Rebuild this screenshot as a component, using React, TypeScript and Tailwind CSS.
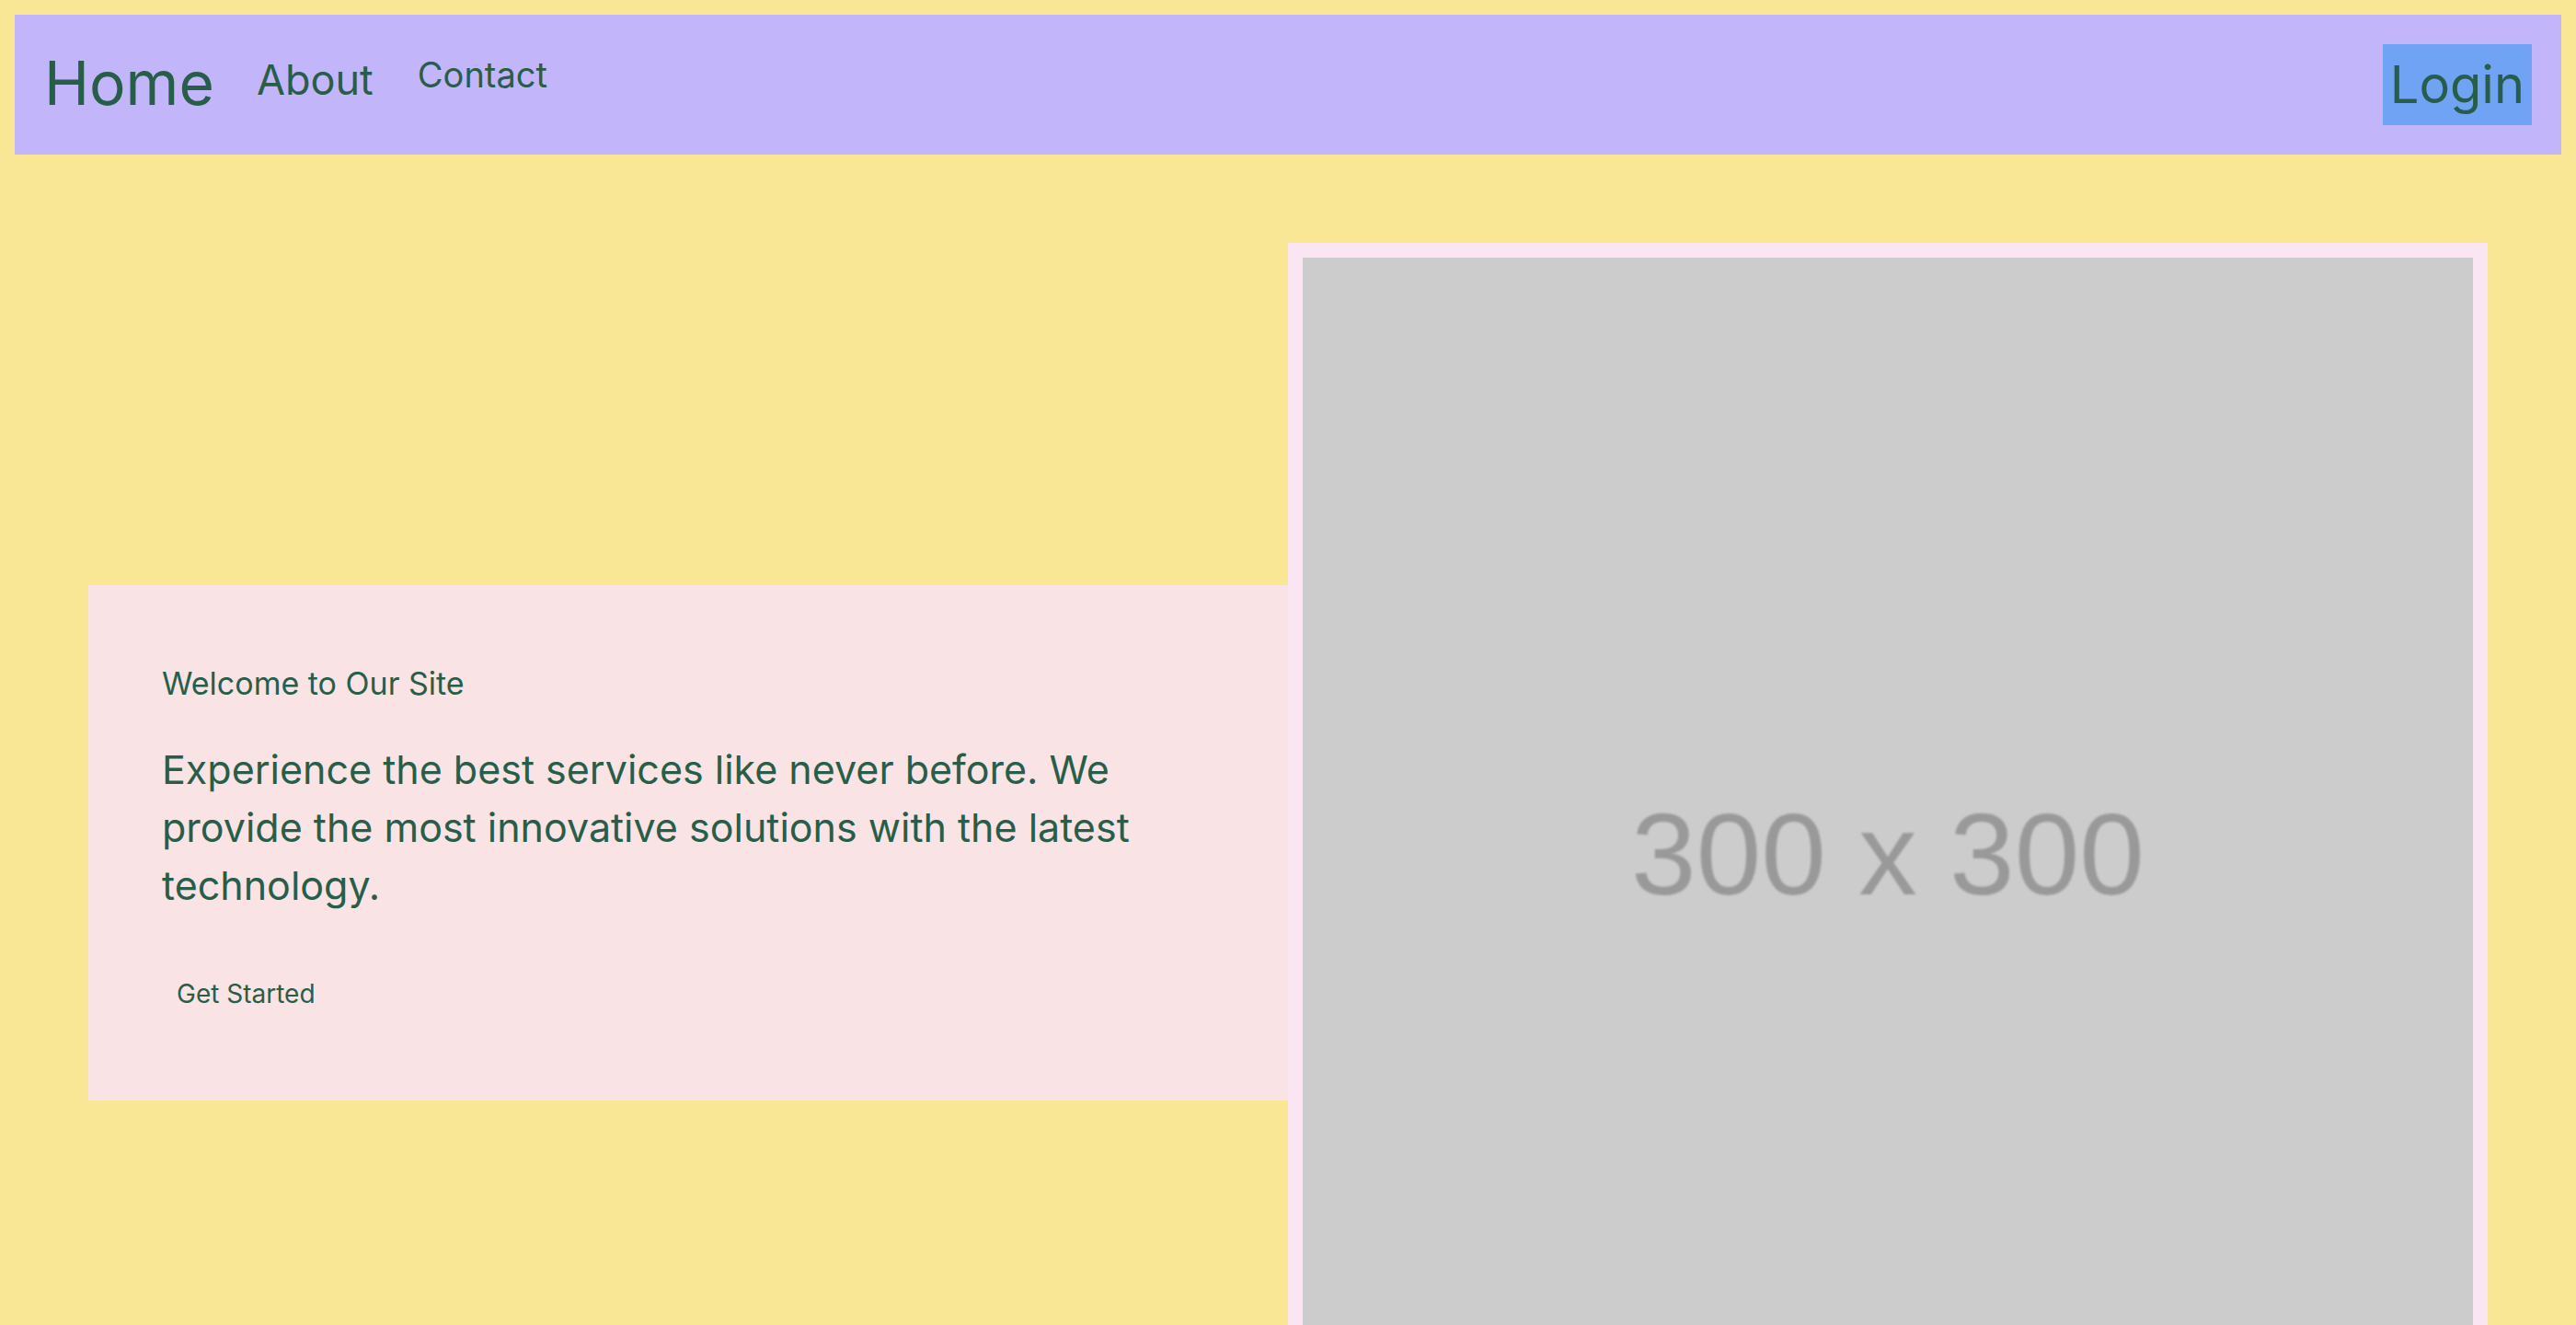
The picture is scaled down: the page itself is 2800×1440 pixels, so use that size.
import React from 'react';

const App = () => {
  return (
    <div className="min-h-screen bg-[#f9e796] text-[#285e49] font-['Inter',sans-serif] overflow-hidden">
      <nav className="m-4 bg-[#c3b5fa] p-8 flex items-start justify-between">
        <div className="flex items-start">
          <a href="#" className="text-[66px] leading-none mt-[9px] mr-[46px]">Home</a>
          <a href="#" className="text-[45px] leading-none mt-[16px] mr-[48px]">About</a>
          <a href="#" className="text-[38px] leading-none mt-[14px]">Contact</a>
        </div>
        <button className="bg-[#71a3f4] text-[56px] leading-none px-2 py-4">Login</button>
      </nav>

      <main className="px-24 pt-20 flex items-center">
        <section className="w-1/2 bg-[#f9e3e4] px-20 pt-[86px] pb-[87px]">
          <h2 className="text-[34px] leading-tight">Welcome to Our Site</h2>
          <p className="mt-10 text-[43px] leading-[63px]">
            Experience the best services like never before. We provide the most innovative solutions with the latest technology.
          </p>
          <button className="mt-[57px] px-4 py-2 text-[28px]">Get Started</button>
        </section>

        <div className="w-1/2 bg-[#f9e6f2] p-4">
          <div className="aspect-square w-full bg-[#cccccc] flex items-center justify-center">
            <span className="font-['Liberation_Sans',sans-serif] text-[127px] text-[#999999] blur-[1px] pt-6">
              300 x 300
            </span>
          </div>
        </div>
      </main>
    </div>
  );
};

export default App;
